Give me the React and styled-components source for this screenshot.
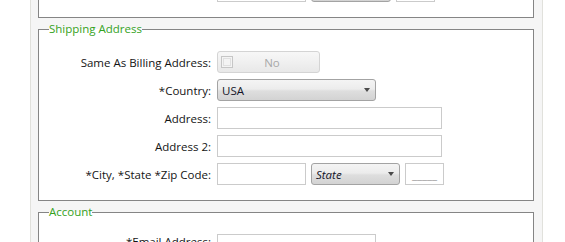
import React from "react";
import styled, { createGlobalStyle } from "styled-components";

const GlobalStyle = createGlobalStyle`
  html, body {
    margin: 0;
    padding: 0;
    background: #ffffff;
  }
  body {
    font-family: 'Open Sans', 'Noto Sans', sans-serif;
    font-size: 11.5px;
    color: #141414;
  }
`;

const Viewport = styled.div`
  width: 565px;
  height: 242px;
  overflow: hidden;
`;

// the form is scrolled: the billing group sits mostly above the window
const Panel = styled.div`
  margin: -50px 0 0 30px;
  width: 513px;
  box-sizing: border-box;
  padding: 0 8px 0 7px;
  background: #f5f5f5;
  border-left: 1px solid #e1e1dc;
  border-right: 1px solid #e1e1dc;
  display: flex;
  flex-direction: column;
  gap: 3px;
`;

const Group = styled.fieldset`
  margin: 0;
  padding: 14px 0 15px 0;
  border: 1px solid #858585;
  background: #ffffff;
  min-width: 0;
`;

const Legend = styled.legend`
  margin-left: 10px;
  padding: 0;
  height: 16px;
  color: #34a21c;
  font-size: 11.5px;
  line-height: 16px;
`;

const Form = styled.div`
  display: grid;
  grid-template-columns: 172px 1fr;
  column-gap: 6px;
  row-gap: 6px;
  grid-auto-rows: 22px;
  align-items: center;
`;

const Label = styled.label`
  align-self: ${({ $top }) => ($top ? "start" : "center")};
  text-align: right;
  white-space: nowrap;
  color: #141414;
`;

const Field = styled.div`
  display: flex;
  align-items: center;
  gap: 5px;
  height: 22px;
`;

const TextBox = styled.div`
  box-sizing: border-box;
  width: ${({ $w }) => $w}px;
  height: 22px;
  border: 1px solid #cbcbcb;
  background: #ffffff;
  display: flex;
  align-items: flex-end;
  justify-content: center;
`;

const Blank = styled.span`
  color: #9a9a9a;
  line-height: 14px;
  margin-bottom: 2px;
`;

const Combo = styled.div`
  box-sizing: border-box;
  width: ${({ $w }) => $w}px;
  height: 22px;
  border: 1px solid #a3a3a3;
  border-radius: 3px;
  background: linear-gradient(#f4f4f4 0%, #ececec 45%, #dedede 55%, #d3d3d3 100%);
  display: flex;
  align-items: center;
  justify-content: space-between;
  padding: 0 5px 0 4px;
  color: #141428;
  font-style: ${({ $italic }) => ($italic ? "italic" : "normal")};
`;

const Arrow = styled.span`
  margin-left: auto;
  width: 0;
  height: 0;
  border-left: 3.5px solid transparent;
  border-right: 3.5px solid transparent;
  border-top: 4px solid #4a4a4a;
`;

const Toggle = styled.div`
  box-sizing: border-box;
  width: 103px;
  height: 22px;
  border: 1px solid #d4d4d4;
  border-radius: 3px;
  background: linear-gradient(#f7f7f7 0%, #f0f0f0 50%, #e8e8e8 100%);
  display: flex;
  align-items: center;
  padding-left: 3px;
  color: #a8a8a8;
`;

const Check = styled.span`
  box-sizing: border-box;
  width: 12px;
  height: 12px;
  border: 1px solid #c6c6c6;
  background: #f4f4f4;
  display: flex;
  align-items: center;
  justify-content: center;

  &::after {
    content: '';
    width: 8px;
    height: 8px;
    box-sizing: border-box;
    border: 1px solid #e0e0e0;
  }
`;

const ToggleText = styled.span`
  flex: 1;
  text-align: center;
  padding-right: 8px;
`;

const CityRow = ({ stateWidth, showText = true }) => (
  <Field>
    <TextBox $w={89} />
    <Combo $w={stateWidth} $italic>
      {showText && "State"}
      <Arrow />
    </Combo>
    <TextBox $w={39}>{showText && <Blank>_____</Blank>}</TextBox>
  </Field>
);

export default function App() {
  return (
    <Viewport>
      <GlobalStyle />
      <Panel>
        <Group aria-label="Billing Address">
          <Legend />
          <Form>
            <Label />
            <CityRow stateWidth={80} showText={false} />
          </Form>
        </Group>

        <Group>
          <Legend>Shipping Address</Legend>
          <Form>
            <Label>Same As Billing Address:</Label>
            <Field>
              <Toggle>
                <Check />
                <ToggleText>No</ToggleText>
              </Toggle>
            </Field>

            <Label>*Country:</Label>
            <Field>
              <Combo $w={159}>
                USA
                <Arrow />
              </Combo>
            </Field>

            <Label>Address:</Label>
            <Field>
              <TextBox $w={225} />
            </Field>

            <Label>Address 2:</Label>
            <Field>
              <TextBox $w={225} />
            </Field>

            <Label>*City, *State *Zip Code:</Label>
            <CityRow stateWidth={89} />
          </Form>
        </Group>

        <Group>
          <Legend>Account</Legend>
          <Form>
            <Label $top>*Email Address:</Label>
            <Field>
              <TextBox $w={159} />
            </Field>
          </Form>
        </Group>
      </Panel>
    </Viewport>
  );
}
